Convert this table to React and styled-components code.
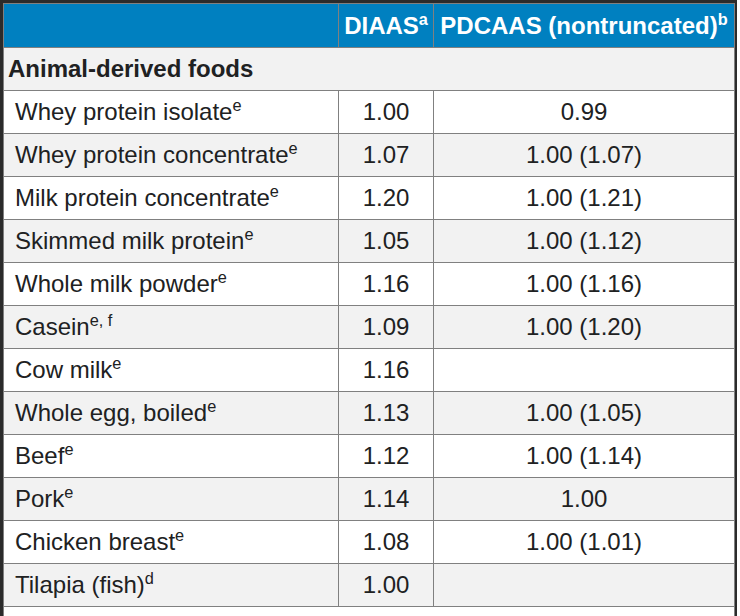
import styled, { createGlobalStyle } from 'styled-components';

const GlobalStyle = createGlobalStyle`
  html, body {
    margin: 0;
    padding: 0;
    background: #fff;
  }
  body {
    font-family: "Liberation Sans", Arial, sans-serif;
  }
`;

const Frame = styled.div`
  width: 731px;
  border: 3px solid #2b2b2b;
  border-bottom: none;
`;

const Table = styled.table`
  width: 731px;
  border-collapse: collapse;
  table-layout: fixed;
  font-size: 24px;
  line-height: 1.15;
  color: #202122;
`;

const HeadCell = styled.th`
  background: #0080c0;
  color: #fff;
  font-weight: bold;
  height: 43px;
  padding: 0 2px;
  border: 1px solid #808080;
  text-align: center;
  white-space: nowrap;
`;

const Row = styled.tr`
  background: ${(p) => (p.$striped ? '#f2f2f2' : '#fff')};
`;

const SectionCell = styled.td`
  font-weight: bold;
  height: 42px;
  padding: 0 4px;
  border: 1px solid #808080;
`;

const Cell = styled.td`
  height: 42px;
  padding: 0 ${(p) => (p.$center ? '4px' : '11px')};
  border: 1px solid #808080;
  text-align: ${(p) => (p.$center ? 'center' : 'left')};
  white-space: nowrap;
`;

const Sup = styled.sup`
  font-size: 0.68em;
  line-height: 0;
  vertical-align: 0.55em;
`;

const rows = [
  ['Whey protein isolate', 'e', '1.00', '0.99'],
  ['Whey protein concentrate', 'e', '1.07', '1.00 (1.07)'],
  ['Milk protein concentrate', 'e', '1.20', '1.00 (1.21)'],
  ['Skimmed milk protein', 'e', '1.05', '1.00 (1.12)'],
  ['Whole milk powder', 'e', '1.16', '1.00 (1.16)'],
  ['Casein', 'e, f', '1.09', '1.00 (1.20)'],
  ['Cow milk', 'e', '1.16', ''],
  ['Whole egg, boiled', 'e', '1.13', '1.00 (1.05)'],
  ['Beef', 'e', '1.12', '1.00 (1.14)'],
  ['Pork', 'e', '1.14', '1.00'],
  ['Chicken breast', 'e', '1.08', '1.00 (1.01)'],
  ['Tilapia (fish)', 'd', '1.00', ''],
];

export default function App() {
  return (
    <>
      <GlobalStyle />
      <Frame>
        <Table>
          <colgroup>
            <col style={{ width: 335 }} />
            <col style={{ width: 95 }} />
            <col style={{ width: 301 }} />
          </colgroup>
          <thead>
            <tr>
              <HeadCell />
              <HeadCell>
                DIAAS<Sup>a</Sup>
              </HeadCell>
              <HeadCell>
                PDCAAS (nontruncated)<Sup>b</Sup>
              </HeadCell>
            </tr>
          </thead>
          <tbody>
            <Row $striped>
              <SectionCell colSpan={3}>Animal-derived foods</SectionCell>
            </Row>
            {rows.map(([name, note, diaas, pdcaas], i) => (
              <Row key={name} $striped={i % 2 === 1}>
                <Cell>
                  {name}
                  <Sup>{note}</Sup>
                </Cell>
                <Cell $center>{diaas}</Cell>
                <Cell $center>{pdcaas}</Cell>
              </Row>
            ))}
            <Row>
              <Cell colSpan={3} />
            </Row>
          </tbody>
        </Table>
      </Frame>
    </>
  );
}
